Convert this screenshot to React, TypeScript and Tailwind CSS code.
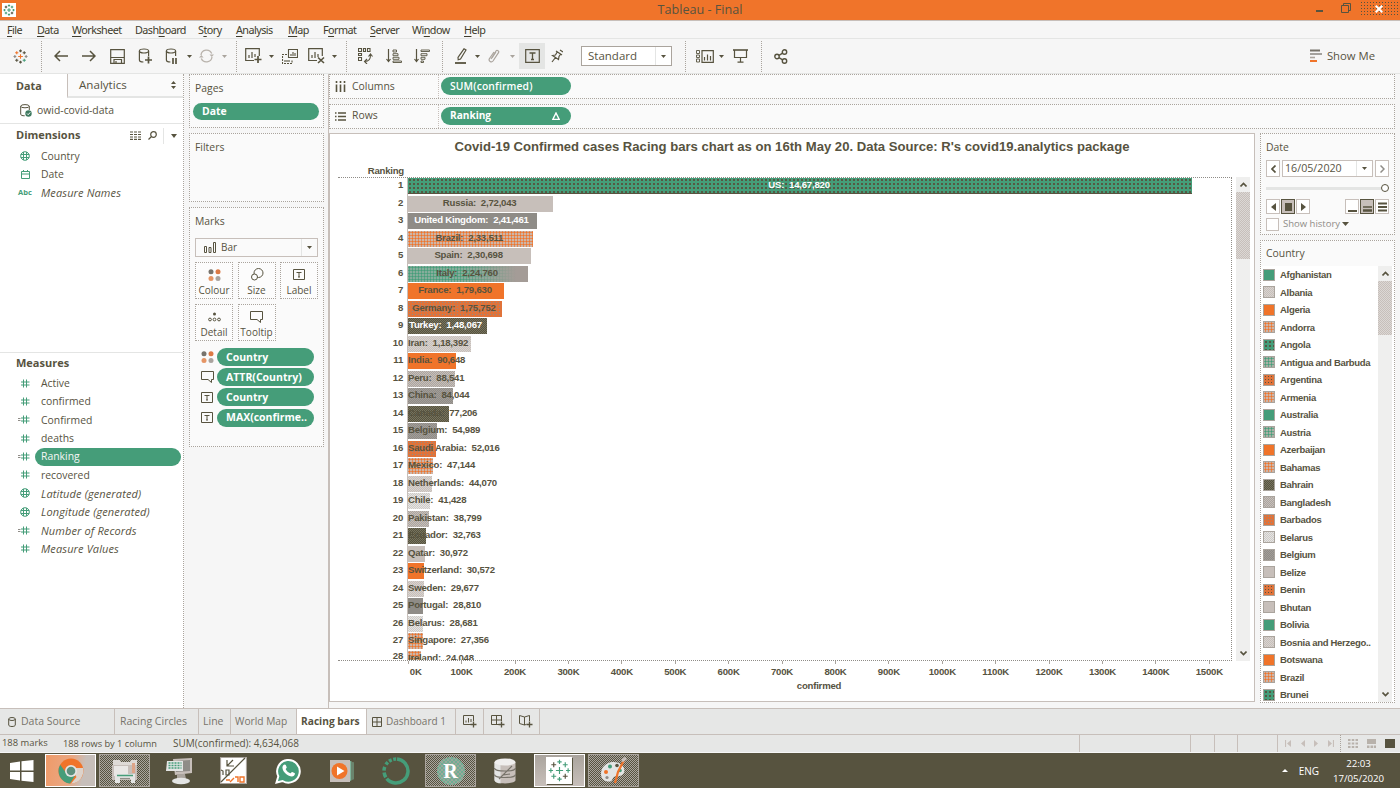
import React from 'react';
import type { ReactNode } from 'react';

const DOT = 'border border-dotted border-[#aaa49d]';

const CHECK = {
  green: 'bg-[#459d79]',
  greenDark: 'bg-[radial-gradient(circle,#57533f_0.7px,transparent_0.8px)] bg-[length:4px_4px] bg-[#459d79]',
  beige: 'bg-[#c7bfba]',
  beigeGray: 'bg-[repeating-conic-gradient(#c7bfba_0_25%,#aba59f_0_50%)] bg-[length:2px_2px]',
  beigeLight: 'bg-[repeating-conic-gradient(#c7bfba_0_25%,#d8d3cf_0_50%)] bg-[length:2px_2px]',
  pale: 'bg-[repeating-conic-gradient(#e4e5e4_0_25%,#cfcac6_0_50%)] bg-[length:2px_2px]',
  gray: 'bg-[#8f8c87]',
  grayBeige: 'bg-[repeating-conic-gradient(#8f8c87_0_25%,#a29d98_0_50%)] bg-[length:2px_2px]',
  orangeBeige: 'bg-[radial-gradient(circle,#f0742a_0.9px,transparent_1.2px)] bg-[length:3px_3px] bg-[#cdb5a8]',
  greenGray: 'bg-[radial-gradient(circle,#459d79_0.9px,transparent_1.2px)] bg-[length:3px_3px] bg-[#a9b0a5]',
  greenGrayFade: 'bg-[linear-gradient(90deg,transparent_45%,#a49c97_90%),radial-gradient(circle,#459d79_0.9px,transparent_1.2px)] bg-[length:100%_100%,3px_3px] bg-[#86ad9b]',
  orange: 'bg-[#f0742a]',
  orangeGray: 'bg-[radial-gradient(circle,#8f8c87_0.8px,transparent_0.9px)] bg-[length:3px_3px] bg-[#e0733a]',
  orangeDark: 'bg-[radial-gradient(circle,#57533f_0.8px,transparent_0.9px)] bg-[length:3px_3px] bg-[#e0733a]',
  dark: 'bg-[repeating-conic-gradient(#57533f_0_25%,#77745f_0_50%)] bg-[length:2px_2px]',
};
type Fill = keyof typeof CHECK;

const BARS: [string, string, number, Fill, boolean?][] = [
  ['US', '14,67,820', 1467820, 'greenDark', true],
  ['Russia', '2,72,043', 272043, 'beige'],
  ['United Kingdom', '2,41,461', 241461, 'gray', true],
  ['Brazil', '2,33,511', 233511, 'orangeBeige'],
  ['Spain', '2,30,698', 230698, 'beige'],
  ['Italy', '2,24,760', 224760, 'greenGrayFade'],
  ['France', '1,79,630', 179630, 'orange'],
  ['Germany', '1,75,752', 175752, 'orangeGray'],
  ['Turkey', '1,48,067', 148067, 'dark', true],
  ['Iran', '1,18,392', 118392, 'beigeLight'],
  ['India', '90,648', 90648, 'orange'],
  ['Peru', '88,541', 88541, 'beigeGray'],
  ['China', '84,044', 84044, 'grayBeige'],
  ['Canada', '77,206', 77206, 'dark'],
  ['Belgium', '54,989', 54989, 'grayBeige'],
  ['Saudi Arabia', '52,016', 52016, 'orangeGray'],
  ['Mexico', '47,144', 47144, 'orangeBeige'],
  ['Netherlands', '44,070', 44070, 'beigeLight'],
  ['Chile', '41,428', 41428, 'pale'],
  ['Pakistan', '38,799', 38799, 'beigeGray'],
  ['Ecuador', '32,763', 32763, 'dark'],
  ['Qatar', '30,972', 30972, 'beige'],
  ['Switzerland', '30,572', 30572, 'orange'],
  ['Sweden', '29,677', 29677, 'beigeLight'],
  ['Portugal', '28,810', 28810, 'gray'],
  ['Belarus', '28,681', 28681, 'pale'],
  ['Singapore', '27,356', 27356, 'orangeBeige'],
  ['Ireland', '24,048', 24048, 'orangeBeige'],
];

const LEGEND: [string, Fill][] = [
  ['Afghanistan', 'green'],
  ['Albania', 'beigeLight'],
  ['Algeria', 'orange'],
  ['Andorra', 'orangeBeige'],
  ['Angola', 'greenDark'],
  ['Antigua and Barbuda', 'greenGray'],
  ['Argentina', 'orangeDark'],
  ['Armenia', 'orangeBeige'],
  ['Australia', 'green'],
  ['Austria', 'greenGray'],
  ['Azerbaijan', 'orange'],
  ['Bahamas', 'orangeBeige'],
  ['Bahrain', 'dark'],
  ['Bangladesh', 'beigeGray'],
  ['Barbados', 'orangeGray'],
  ['Belarus', 'pale'],
  ['Belgium', 'grayBeige'],
  ['Belize', 'beige'],
  ['Benin', 'orangeDark'],
  ['Bhutan', 'beige'],
  ['Bolivia', 'green'],
  ['Bosnia and Herzego..', 'beigeLight'],
  ['Botswana', 'orange'],
  ['Brazil', 'orangeBeige'],
  ['Brunei', 'greenDark'],
];

function Svg({ w, h, children, className = '', sw = 1.2 }: { w: number; h: number; children: ReactNode; className?: string; sw?: number }) {
  return (
    <svg width={w} height={h} viewBox={`0 0 ${w} ${h}`} fill="none" stroke="currentColor" strokeWidth={sw} className={`shrink-0 ${className}`}>
      {children}
    </svg>
  );
}

function Caret({ className = '' }: { className?: string }) {
  return (
    <Svg w={5} h={3} className={className}>
      <path d="M0 0h5L2.500 3z" fill="currentColor" stroke="none" />
    </Svg>
  );
}

function BigCaret() {
  return (
    <Svg w={7} h={4}>
      <path d="M0 0h7L3.500 4z" fill="currentColor" stroke="none" />
    </Svg>
  );
}

function plus(x: number, y: number, r: number) {
  return `M${x - r} ${y}h${2 * r}M${x} ${y - r}v${2 * r}`;
}

function TableauMark({ size, mono, sw = 1.2 }: { size: number; mono?: boolean; sw?: number }) {
  const g = mono ? '#459d79' : '#57533f';
  return (
    <svg width={size} height={size} viewBox="0 0 16 16" fill="none" strokeWidth={sw} className="shrink-0">
      <path d={plus(8, 8, 2.500)} stroke={mono ? '#459d79' : '#f0742a'} />
      <path d={plus(8, 2, 1.500) + plus(8, 14, 1.500)} stroke={g} />
      <path d={plus(2, 8, 1.500) + plus(14, 8, 1.500)} stroke={mono ? g : '#8f8c87'} />
      <path d={plus(4, 4, 1.700)} stroke={mono ? '#57533f' : '#f0742a'} />
      <path d={plus(12, 12, 1.700)} stroke={mono ? '#57533f' : '#459d79'} />
      <path d={plus(12, 4, 1.700) + plus(4, 12, 1.700)} stroke={g} />
    </svg>
  );
}

function Cell({ className, children }: { className: string; children: ReactNode }) {
  return <div className={`flex shrink-0 items-center justify-center ${className}`}>{children}</div>;
}

function Sep({ className }: { className: string }) {
  return <div className={`h-[31px] w-px shrink-0 border-l border-dotted border-[#aaa49d] ${className}`} />;
}

function Menu() {
  const items: [string, number, string][] = [
    ['File', 0, 'w-[30px]'],
    ['Data', 0, 'w-[35px]'],
    ['Worksheet', 0, 'w-[63px]'],
    ['Dashboard', 4, 'w-[63px]'],
    ['Story', 1, 'w-[38px]'],
    ['Analysis', 0, 'w-[52px]'],
    ['Map', 0, 'w-[35px]'],
    ['Format', 1, 'w-[47px]'],
    ['Server', 0, 'w-[42px]'],
    ['Window', 2, 'w-[52px]'],
    ['Help', 0, 'w-[40px]'],
  ];
  return (
    <div className="flex h-[19px] shrink-0 items-center border-b border-t border-b-[#e4e5e4] border-t-[#c7bfba] pl-[7px] pt-[2px] text-[10.800px] tracking-[-0.550px] text-[#3f3c2c] font-['Noto_Sans',sans-serif]">
      {items.map(([t, u, w]) => (
        <div key={t} className={`${w} shrink-0 whitespace-nowrap leading-none`}>
          {t.slice(0, u)}
          <span className="underline underline-offset-2">{t[u]}</span>
          {t.slice(u + 1)}
        </div>
      ))}
    </div>
  );
}

function Toolbar() {
  return (
    <div className="flex h-[35px] shrink-0 items-center border-b border-[#e4e5e4] text-[#57533f]">
      <Cell className="w-[41px]"><TableauMark size={15} /></Cell>
      <Sep className="" />
      <Cell className="ml-[5px] w-[28px]"><Svg w={14} h={12} sw={1.500}><path d="M14 6H1M6 1L1 6l5 5" /></Svg></Cell>
      <Cell className="w-[28px]"><Svg w={14} h={12} sw={1.500}><path d="M0 6h13M8 1l5 5-5 5" /></Svg></Cell>
      <Cell className="w-[28px]">
        <Svg w={15} h={15}><path d="M.7.7h13.600v13.600H.7zM.7 8.500h13.600M4 14v-3.500h7.500V14M6 12v2" /></Svg>
      </Cell>
      <Cell className="w-[28px]">
        <Svg w={14} h={16}><ellipse cx="6" cy="3" rx="4.600" ry="2" /><path d="M1.400 3v9c0 1 1.600 2 4 2M10.600 3v5" /><path d="M7 12h7M10.500 8.500v7" strokeWidth="1.700" /></Svg>
      </Cell>
      <Cell className="w-[24px]">
        <Svg w={13} h={16}><ellipse cx="6" cy="3" rx="4.600" ry="2" /><path d="M1.400 3v9c0 1 1.600 2 4 2M10.600 3v5" /><path d="M8 10v6M11 10v6" strokeWidth="1.700" /></Svg>
      </Cell>
      <Cell className="w-[12px]"><Caret /></Cell>
      <Cell className="w-[22px] text-[#b8b2ab]">
        <Svg w={15} h={14} sw={1.300}><path d="M2 6a5.600 5.600 0 0 1 10.700-1.500M13 8A5.600 5.600 0 0 1 2.300 9.500" /><path d="M10.500 5.500h4.500l-2.200 2.500zM0 8.500h4.600L2.300 6z" fill="currentColor" stroke="none" /></Svg>
      </Cell>
      <Cell className="w-[14px] text-[#aaa49d]"><Caret /></Cell>
      <Sep className="ml-[5px]" />
      <Cell className="ml-1 w-[24px]">
        <Svg w={17} h={16}><path d="M9 12.500H.7V.7h13.600V8M4 10V7M7 10V4M10 9V6" /><path d="M9.500 11.500h7M13 8v7" strokeWidth="1.700" /></Svg>
      </Cell>
      <Cell className="w-[12px]"><Caret /></Cell>
      <Cell className="w-[26px]">
        <Svg w={16} h={15} sw={1.100}><path d="M6.500.5h9v8h-9zM9 7V5M11 7V3M13 7V4" /><path d="M5 5.500H.5v9h9.500v-4M3 13v-2M5 13v-3M7 13v-2" strokeDasharray="2 1" /></Svg>
      </Cell>
      <Cell className="w-[26px]">
        <Svg w={17} h={16}><path d="M9 12.500H.7V.7h13.600V8M4 10V7M7 10V4M10 9V6" /><path d="M10 9.500l6 5.500M16 9.500l-6 5.500" strokeWidth="1.600" /></Svg>
      </Cell>
      <Cell className="w-[11px]"><Caret /></Cell>
      <Sep className="ml-[6px]" />
      <Cell className="ml-1 w-[28px]">
        <Svg w={15} h={16} sw={1.100}><path d="M.5.5h3v3h-3zM5.500.5h2v3h-2zM9.500.5h2.500v3H9.500zM.5 5.500h3v2h-3zM.5 9.500h3v3h-3zM7 13.500c4 0 5.500-2.500 5.500-6.500M10.500 8.500l2-2.500 2 2.500M9 11l-2.500 2.500L9 16" /></Svg>
      </Cell>
      <Cell className="w-[29px]">
        <Svg w={16} h={14}><path d="M2.500 0v12M.5 10l2 2.500 2-2.500" /><path d="M7 1h3.500v2H7zM7 4.700h5v2H7zM7 8.300h6v2H7zM7 12h8.500v1.500H7z" strokeWidth=".9" /></Svg>
      </Cell>
      <Cell className="w-[28px]">
        <Svg w={16} h={14}><path d="M2.500 0v12M.5 10l2 2.500 2-2.500" /><path d="M7 1h8.500v1.500H7zM7 4.700h6v2H7zM7 8.300h4v2H7zM7 12h2.500v1.500H7z" strokeWidth=".9" /></Svg>
      </Cell>
      <Sep className="ml-[6px]" />
      <Cell className="ml-[6px] w-[24px]">
        <Svg w={12} h={16}><path d="M9 .8l2 1.200-5.500 9-2.300.8L3 9.500z" /><path d="M0 15h11" strokeWidth="1.800" /></Svg>
      </Cell>
      <Cell className="w-[9px]"><Caret /></Cell>
      <Cell className="w-[24px] text-[#aaa49d]">
        <Svg w={12} h={14}><path d="M3 10l5-8c1-1.500 3.500 0 2.500 1.700L5 12c-1.500 2-5 0-3.500-2.500L6 3M4 9l4-6" /></Svg>
      </Cell>
      <Cell className="w-[12px] text-[#aaa49d]"><Caret /></Cell>
      <Cell className="ml-px h-[26px] w-[26px] bg-[#e4e5e4]">
        <Svg w={15} h={14}><path d="M.7.7h13.600v12.600H.7z" /><path d="M4.500 4h6M7.500 4v6.500M6 10.500h3" strokeWidth="1.300" /></Svg>
      </Cell>
      <Cell className="w-[24px]">
        <Svg w={12} h={14}><path d="M5 2l6 4M6.300 2.800L4.500 6 1.500 6.500l6 4L8 7.500l1.800-2.500M4.500 8.500L1 13M9 1l3 2" /></Svg>
      </Cell>
      <div className="ml-[12px] flex h-[20px] w-[91px] shrink-0 items-center border border-[#aaa49d] bg-white pl-[6px] text-[11.500px] text-[#57533f]">
        <span className="flex-1">Standard</span>
        <span className="flex h-full w-[16px] items-center justify-center border-l border-[#e4e5e4]"><Caret /></span>
      </div>
      <Sep className="ml-[13px]" />
      <Cell className="ml-[8px] w-[22px]">
        <Svg w={18} h={13}><path d="M.5.500h3v3h-3zM.5 5h3v2.500h-3zM.5 9h3v3h-3z" strokeWidth=".9" /><path d="M6 .7h11.300v11.600H6zM8.500 10.500V7M11.500 10.500v-6M14.500 10.500V6" /></Svg>
      </Cell>
      <Cell className="w-[10px]"><Caret /></Cell>
      <Cell className="w-[28px]">
        <Svg w={15} h={14}><path d="M0 1h15" strokeWidth="1.600" /><path d="M1.500 1v7.500h12V1M7.500 8.500V13M4.500 13.200h6" /></Svg>
      </Cell>
      <Sep className="ml-[7px]" />
      <Cell className="ml-[5px] w-[27px]">
        <Svg w={14} h={15} sw={1.400}><circle cx="3" cy="7.500" r="2.200" /><circle cx="10.500" cy="3" r="2.200" /><circle cx="10.500" cy="12" r="2.200" /><path d="M5 6.400l3.600-2.200M5 8.600l3.600 2.200" /></Svg>
      </Cell>
      <div className="ml-auto mr-[25px] flex items-center gap-[5px] text-[11.300px]">
        <Svg w={12} h={13} className="mb-px">
          <path d="M0 1.500h10" stroke="#77736a" strokeWidth="2" /><path d="M0 5h12" stroke="#8f8c87" strokeWidth="1.600" /><path d="M0 8.500h5" stroke="#aaa49d" strokeWidth="1.600" /><path d="M0 12h7" stroke="#f0742a" strokeWidth="2" />
        </Svg>
        <span>Show Me</span>
      </div>
    </div>
  );
}

function Globe() {
  return (
    <Svg w={10} h={10} sw={1} className="text-[#459d79]"><circle cx="5" cy="5" r="4.300" /><path d="M.8 3.500h8.400M.8 6.500h8.400M3.500 1v8M6.500 1v8" /></Svg>
  );
}
function Hash({ eq }: { eq?: boolean }) {
  return (
    <Svg w={12} h={9} sw={1} className="mr-[2px] text-[#459d79]">
      <path d="M5.500.5v8M8.500.5v8M3 3h8.500M3 6h8.500" />
      {eq && <path d="M0 3.500h2.500M0 5.500h2.500" stroke="#8f8c87" />}
    </Svg>
  );
}

function Field({ icon, label, italic, active }: { icon: ReactNode; label: string; italic?: boolean; active?: boolean }) {
  return (
    <div className="flex h-[18.370px] items-center">
      <div className="flex w-[34px] shrink-0 justify-end"><div className="flex w-[18px] items-center justify-center">{icon}</div></div>
      <div
        className={`ml-px mr-[2px] flex h-[18px] flex-1 items-center rounded-full pl-[6px] leading-none ${
          active ? 'bg-[#459d79] text-[#f6f6f6]' : ''
        } ${italic ? 'text-[11px] italic tracking-[0.120px]' : 'text-[10.400px]'}`}
      >
        {label}
      </div>
    </div>
  );
}

function DataPane() {
  return (
    <div className="flex w-[184px] shrink-0 flex-col border-r border-dotted border-[#aaa49d] bg-white">
      <div className="flex h-[24px] shrink-0">
        <div className="flex w-[67px] items-center pl-[16px] text-[10.800px] font-bold">Data</div>
        <div className="flex flex-1 items-center justify-between border-b-2 border-l border-b-[#e4e5e4] border-l-[#c7bfba] bg-[#fafafa] pl-[11px] pr-[7px] text-[11.600px]">
          <span>Analytics</span>
          <Svg w={5} h={8}><path d="M0 3h5L2.500 0zM0 5h5L2.500 8z" fill="currentColor" stroke="none" /></Svg>
        </div>
      </div>
      <div className="flex h-[26px] shrink-0 items-center border-b border-[#e4e5e4] pl-[20px] text-[10.400px]">
        <Svg w={12} h={13} sw={1} className="mr-[5px]"><ellipse cx="5" cy="2.200" rx="4.300" ry="1.600" /><path d="M.7 2.200v8c0 1 1.500 1.600 4 1.600M9.300 2.200V6" /><circle cx="8.500" cy="9.500" r="3.200" fill="#3f7a60" stroke="none" /><path d="M7 9.500l1.200 1.200 2-2.300" stroke="#fff" /></Svg>
        owid-covid-data
      </div>
      <div className="flex h-[23px] shrink-0 items-center pl-[16px] pr-[6px]">
        <span className="flex-1 text-[11px] font-bold">Dimensions</span>
        <Svg w={11} h={9} sw={1.200}><path d="M0 1h11M0 3.500h11M0 6h11M0 8.300h11" strokeDasharray="3 1" /></Svg>
        <Svg w={9} h={9} className="ml-[7px]"><circle cx="5.500" cy="3.500" r="2.800" /><path d="M3.500 5.500L.5 8.500" /></Svg>
        <div className="ml-[6px] mr-[7px] h-[16px] w-px bg-[#e4e5e4]" />
        <Svg w={6} h={4}><path d="M0 0h6L3 4z" fill="currentColor" stroke="none" /></Svg>
      </div>
      <div className="flex h-[206px] shrink-0 flex-col border-b border-[#e4e5e4]">
        <Field icon={<Globe />} label="Country" />
        <Field icon={<Svg w={9} h={9} sw={1} className="text-[#459d79]"><path d="M.5 1.500h8v7h-8zM.5 4h8M2.500 0v2M6.500 0v2" /></Svg>} label="Date" />
        <Field icon={<span className="text-[7.500px] font-bold text-[#459d79]">Abc</span>} label="Measure Names" italic />
      </div>
      <div className="flex h-[21px] shrink-0 items-center pl-[16px] text-[11px] font-bold">Measures</div>
      <Field icon={<Hash />} label="Active" />
      <Field icon={<Hash />} label="confirmed" />
      <Field icon={<Hash eq />} label="Confirmed" />
      <Field icon={<Hash />} label="deaths" />
      <Field icon={<Hash eq />} label="Ranking" active />
      <Field icon={<Hash />} label="recovered" />
      <Field icon={<Globe />} label="Latitude (generated)" italic />
      <Field icon={<Globe />} label="Longitude (generated)" italic />
      <Field icon={<Hash eq />} label="Number of Records" italic />
      <Field icon={<Hash />} label="Measure Values" italic />
    </div>
  );
}

function Pill({ children, className }: { children: ReactNode; className: string }) {
  return (
    <div className={`flex shrink-0 items-center rounded-full bg-[#459d79] leading-none text-white ${className}`}>{children}</div>
  );
}

function Dots() {
  return (
    <Svg w={13} h={12}>
      <g stroke="none"><circle cx="3" cy="2.800" r="2.500" fill="#77736c" /><circle cx="10" cy="2.800" r="2.500" fill="#dc7a45" /><circle cx="3" cy="9.500" r="2.500" fill="#e59565" /><circle cx="10" cy="9.500" r="2.500" fill="#a9a39e" /></g>
    </Svg>
  );
}
function TextBox() {
  return <Svg w={12} h={11} sw={1}><path d="M.5.500h11v10H.5z" /><path d="M3.500 3.500h5M6 3.500v4.500M5 8h2" /></Svg>;
}
function Bubble() {
  return <Svg w={13} h={12} sw={1}><path d="M.5.500h12v8h-2v3l-3.500-3H.5z" /></Svg>;
}

function MarkButton({ icon, label }: { icon: ReactNode; label: string }) {
  return (
    <div className={`flex h-[37px] w-[38px] flex-col items-center bg-[#fcfcfc] pt-[5px] ${DOT}`}>
      <div className="flex h-[13px] items-center">{icon}</div>
      <div className="mt-[4px] text-[10px] leading-[11px]">{label}</div>
    </div>
  );
}

function Cards() {
  const marks: [ReactNode, string][] = [
    [<Dots key="i" />, 'Country'],
    [<Bubble key="i" />, 'ATTR(Country)'],
    [<TextBox key="i" />, 'Country'],
    [<TextBox key="i" />, 'MAX(confirme..'],
  ];
  return (
    <div className="flex w-[145px] shrink-0 flex-col border-r border-[#c7bfba] pl-[5px] pr-[4px] text-[10.400px]">
      <div className={`h-[54px] shrink-0 bg-[#fafafa] ${DOT}`}>
        <div className="flex h-[27px] items-center pl-[5px]">Pages</div>
        <Pill className="ml-[3px] mt-px h-[17px] w-[126px] pl-[9px] text-[10.400px] font-bold">Date</Pill>
      </div>
      <div className={`mt-[5px] h-[69px] shrink-0 bg-[#fafafa] ${DOT}`}>
        <div className="flex h-[27px] items-center pl-[5px]">Filters</div>
      </div>
      <div className={`mt-[5px] h-[240px] shrink-0 bg-[#fafafa] pl-[5px] ${DOT}`}>
        <div className="flex h-[27px] items-center">Marks</div>
        <div className="mt-[3px] flex h-[19px] w-[123px] items-center border border-[#c7bfba] bg-[#fafafa] pl-[8px]">
          <Svg w={13} h={11} sw={1}><path d="M.5 4.500h2v6h-2zM5 5.500h2v5H5zM9.500.5h2v10h-2z" /></Svg>
          <span className="ml-[4px] flex-1 text-[10px]">Bar</span>
          <span className="flex h-full w-[16px] items-center justify-center border-l border-[#e4e5e4]"><Caret /></span>
        </div>
        <div className="mt-[5px] grid grid-cols-[38px_38px_38px] gap-x-[4.500px] gap-y-[5px]">
          <MarkButton icon={<Dots />} label="Colour" />
          <MarkButton icon={<Svg w={14} h={13} sw={1}><circle cx="8.500" cy="5" r="4.500" /><circle cx="4.500" cy="9" r="3" fill="#fcfcfc" /></Svg>} label="Size" />
          <MarkButton icon={<TextBox />} label="Label" />
          <MarkButton icon={<Svg w={13} h={10} sw={1}><circle cx="6.500" cy="2" r="1.500" fill="currentColor" stroke="none" /><circle cx="2" cy="7.500" r="1.400" /><circle cx="6.500" cy="7.500" r="1.400" /><circle cx="11" cy="7.500" r="1.400" /></Svg>} label="Detail" />
          <MarkButton icon={<Bubble />} label="Tooltip" />
        </div>
        <div className="mt-[6px] flex flex-col">
          {marks.map(([icon, label], i) => (
            <div key={i} className="flex h-[20.200px] items-center">
              <div className="flex w-[22px] items-center justify-center pl-[2px]">{icon}</div>
              <Pill className="h-[18px] w-[97px] pl-[9px] text-[10.500px] font-bold">{label}</Pill>
            </div>
          ))}
        </div>
      </div>
    </div>
  );
}

function Shelf({ icon, label, children }: { icon: ReactNode; label: string; children: ReactNode }) {
  return (
    <div className={`flex h-[25px] shrink-0 items-center bg-[#fafafa] ${DOT}`}>
      <div className="flex h-full w-[109px] items-center border-r border-dotted border-[#c7bfba] pl-[5px] text-[10.400px]">
        <span className="mr-[6px] flex w-[11px]">{icon}</span>
        {label}
      </div>
      {children}
    </div>
  );
}

function ScrollBar({ className, thumb }: { className: string; thumb: string }) {
  return (
    <div className={`flex shrink-0 flex-col bg-[#efefee] ${className}`}>
      <div className="flex h-[15px] items-center justify-center"><Svg w={7} h={5} sw={1.600}><path d="M.5 4.500l3-3 3 3" /></Svg></div>
      <div className={`bg-[repeating-conic-gradient(#c7bfba_0_25%,#dcd8d5_0_50%)] bg-[length:2px_2px] ${thumb}`} />
      <div className="flex-1" />
      <div className="flex h-[15px] items-center justify-center"><Svg w={7} h={5} sw={1.600}><path d="M.5.500l3 3 3-3" /></Svg></div>
    </div>
  );
}

function Chart() {
  const scale = 53.42 / 100000;
  const small = 'text-[9.600px] tracking-[-0.220px]';
  return (
    <div className="flex h-[569px] w-[926px] shrink-0 flex-col border border-[#c7bfba] bg-white font-['Liberation_Sans',Arial,sans-serif] font-bold">
      <div className="pt-[5px] text-center text-[13.110px] leading-[16px]">
        Covid-19 Confirmed cases Racing bars chart as on 16th May 20. Data Source: R&apos;s covid19.analytics package
      </div>
      <div className={`mt-[10px] w-[74px] self-start text-right leading-[12px] ${small}`}>Ranking</div>
      <div className="flex h-[484px] pl-[8px]">
        <div className={`flex w-[894px] flex-col overflow-hidden border-b border-r border-t border-dotted border-[#8f8c87] ${small}`}>
          {BARS.map(([name, value, n, fill, light], i) => {
            const width = n * scale;
            return (
              <div key={name} className="flex h-[17.500px] shrink-0 items-start">
                <div className={`w-[65px] shrink-0 text-right leading-none ${i === 27 ? 'pt-0' : 'pt-[2px]'}`}>{i + 1}</div>
                <div className="ml-[4px] h-full border-l border-[#c7bfba]" />
                <div className={`flex h-[16px] shrink-0 items-center ${CHECK[fill]} ${n > 150000 ? 'justify-center' : ''} ${i === 0 ? 'border-b border-[#57533f]' : ''}`} style={{ width }}>
                  <span className={`whitespace-pre pb-[2px] leading-none ${n > 150000 ? '-ml-[2px]' : n > 140000 ? 'ml-px' : ''} ${light ? 'text-white' : ''}`}>{`${name}:  ${value}`}</span>
                </div>
              </div>
            );
          })}
        </div>
        <ScrollBar className="ml-[4px] w-[14px]" thumb="h-[67px]" />
      </div>
      <div className="flex pl-[51.500px]">
        {Array.from({ length: 16 }, (_, i) => (
          <div key={i} className="flex w-[53.420px] shrink-0 flex-col items-center">
            <div className="h-[3px] w-px bg-[#aaa49d]" />
            <div className={`mt-[2px] leading-[12px] ${small} ${i === 0 ? 'pl-[15px]' : ''}`}>{i * 100}K</div>
          </div>
        ))}
      </div>
      <div className={`mt-[2px] pl-[54px] text-center leading-[11px] ${small}`}>confirmed</div>
    </div>
  );
}

function SmallBox({ children, className = '' }: { children: ReactNode; className?: string }) {
  return <div className={`flex h-[15px] w-[14px] items-center justify-center border border-[#c7bfba] bg-white ${className}`}>{children}</div>;
}

function SidePanel() {
  return (
    <div className="flex w-[135px] shrink-0 flex-col">
      <div className={`h-[102px] shrink-0 bg-[#fafafa] pl-[5px] pr-[5px] ${DOT}`}>
        <div className="flex h-[26px] items-center pt-px text-[10.400px]">Date</div>
        <div className="flex h-[17px] items-stretch gap-[2px]">
          <SmallBox className="h-auto"><Svg w={5} h={8} sw={1.700}><path d="M4.500.5L1 4l3.500 3.500" /></Svg></SmallBox>
          <div className="flex flex-1 items-center border border-[#c7bfba] bg-white pl-[2px] text-[10.700px]">
            <span className="flex-1 leading-none">16/05/2020</span>
            <span className="flex h-full w-[16px] items-center justify-center border-l border-[#e4e5e4]"><Caret /></span>
          </div>
          <SmallBox className="h-auto text-[#8f8c87]"><Svg w={5} h={8} sw={1.500}><path d="M.5.500L4 4 .5 7.500" /></Svg></SmallBox>
        </div>
        <div className="flex h-[22px] items-center">
          <div className="h-[3px] flex-1 bg-[#e4e5e4]" />
          <div className="-ml-px h-[8px] w-[8px] rounded-full border border-[#57533f] bg-white" />
        </div>
        <div className="flex h-[15px] items-center gap-[1px]">
          <SmallBox><Svg w={5} h={8}><path d="M5 0v8L0 4z" fill="currentColor" stroke="none" /></Svg></SmallBox>
          <SmallBox className="!border-[#57533f] !bg-[#c7bfba]"><Svg w={7} h={8}><path d="M0 0h7v8H0z" fill="#57533f" stroke="none" /></Svg></SmallBox>
          <SmallBox><Svg w={5} h={8}><path d="M0 0v8l5-4z" fill="currentColor" stroke="none" /></Svg></SmallBox>
          <div className="flex-1" />
          <SmallBox><Svg w={9} h={10} sw={2}><path d="M0 9h9" /></Svg></SmallBox>
          <SmallBox className="!border-[#57533f] !bg-[#c7bfba]"><Svg w={9} h={10} sw={1.500}><path d="M0 5h9" /><path d="M0 8.500h9" strokeWidth="2.500" /></Svg></SmallBox>
          <SmallBox><Svg w={9} h={10} sw={2}><path d="M0 1.500h9M0 5h9M0 8.500h9" /></Svg></SmallBox>
        </div>
        <div className="mt-[3px] flex h-[14px] items-center text-[9.500px] text-[#8f8c87]">
          <div className="mr-[4px] h-[13px] w-[13px] border border-[#c7bfba] bg-white" />
          Show history
          <span className="ml-[2px] text-[#57533f]"><BigCaret /></span>
        </div>
      </div>
      <div className={`mt-[5px] flex h-[463px] shrink-0 flex-col bg-white ${DOT}`}>
        <div className="flex h-[25px] shrink-0 items-center bg-[#fafafa] pl-[5px] pt-px text-[10.400px]">Country</div>
        <div className="flex h-[436px]">
          <div className="w-[117px] shrink-0 font-['Liberation_Sans',Arial,sans-serif] text-[9.500px] font-bold tracking-[-0.300px]">
            {LEGEND.map(([n, f]) => (
              <div key={n} className="flex h-[17.500px] items-center whitespace-nowrap">
                <div className={`ml-[2px] mr-[5px] h-[12px] w-[12px] border border-[#aaa49d] ${CHECK[f]}`} />
                <span className="leading-none">{n}</span>
              </div>
            ))}
          </div>
          <ScrollBar className="w-[14px]" thumb="h-[54px]" />
        </div>
      </div>
    </div>
  );
}

function Tab({ children, className }: { children: ReactNode; className: string }) {
  return <div className={`flex h-full shrink-0 items-center border-r border-[#c7bfba] text-[#77736a] ${className}`}>{children}</div>;
}

function GridIcon() {
  return <Svg w={10} h={10} sw={1}><path d="M.5.500h9v9h-9zM5 .5v9M.5 5h9" /></Svg>;
}

function SheetTabs() {
  return (
    <div className="flex h-[27px] shrink-0 border-b border-t border-b-[#c7bfba] border-t-[#c7bfba] bg-[#e6e7e6] text-[10.500px]">
      <Tab className="w-[115px] pl-[8px]">
        <Svg w={8} h={10} sw={1} className="mr-[5px] text-[#57533f]"><ellipse cx="4" cy="2" rx="3.300" ry="1.500" /><path d="M.7 2v6c0 2 6.600 2 6.600 0V2" /></Svg>
        Data Source
      </Tab>
      <Tab className="w-[84px] pl-[5px]">Racing Circles</Tab>
      <Tab className="w-[32px] pl-[4px]">Line</Tab>
      <Tab className="w-[66px] pl-[4px] text-[10.200px]">World Map</Tab>
      <Tab className="w-[70px] bg-white pl-[4px] text-[10.200px] font-bold !text-[#57533f]">Racing bars</Tab>
      <Tab className="w-[89px] pl-[5px] text-[10px]"><span className="mr-[4px] text-[#57533f]"><GridIcon /></span>Dashboard 1</Tab>
      <Tab className="w-[28px] justify-center !text-[#57533f]"><Svg w={14} h={13} sw={1}><path d="M8 9.500H.5v-9h10V6M3 7.500v-2M5.500 7.500V3M8 7V4" /><path d="M7.500 9.500h6M10.500 6.500v6" strokeWidth="1.300" /></Svg></Tab>
      <Tab className="w-[28px] justify-center !text-[#57533f]"><Svg w={14} h={13} sw={1}><path d="M8 9.500H.5v-9h10V6M5.500.500v9M.5 5h10" /><path d="M7.500 9.500h6M10.500 6.500v6" strokeWidth="1.300" /></Svg></Tab>
      <Tab className="w-[28px] justify-center !text-[#57533f]"><Svg w={14} h={13} sw={1}><path d="M5.500 2v8M5.500 10L.5 8.500v-8L5.500 2l5-1.500V6M5.500 10l2-.6" /><path d="M7.500 9.500h6M10.500 6.500v6" strokeWidth="1.300" /></Svg></Tab>
    </div>
  );
}

function StatusBar() {
  const box = 'h-full shrink-0 border-l border-[#c7bfba]';
  return (
    <div className="flex h-[18px] shrink-0 items-center border-b border-[#f6f6f6] bg-[#e6e7e6] text-[#57533f]">
      <span className="w-[61px] shrink-0 pl-[2px] text-[9.400px]">188 marks</span>
      <span className="w-[112px] shrink-0 pl-[2px] text-[9.230px]">188 rows by 1 column</span>
      <span className="text-[10px]">SUM(confirmed): 4,634,068</span>
      <div className="flex-1" />
      <div className={`w-[111px] ${box}`} />
      <div className={`w-[24px] ${box}`} />
      <div className={`w-[23px] ${box}`} />
      <div className={`w-[41px] border-r ${box}`} />
      <div className="flex w-[62px] shrink-0 items-center justify-between pl-[7px] pr-[6px] text-[#c7bfba]">
        <Svg w={6} h={7}><path d="M.5 0v7" /><path d="M6 0v7L2 3.500z" fill="currentColor" stroke="none" /></Svg>
        <Svg w={4} h={7}><path d="M4 0v7L0 3.500z" fill="currentColor" stroke="none" /></Svg>
        <Svg w={4} h={7}><path d="M0 0v7l4-3.500z" fill="currentColor" stroke="none" /></Svg>
        <Svg w={6} h={7}><path d="M5.500 0v7" /><path d="M0 0v7l4-3.500z" fill="currentColor" stroke="none" /></Svg>
      </div>
      <div className="flex h-full w-[60px] shrink-0 items-center gap-[9px] border-l border-dotted border-[#aaa49d] pl-[7px]">
        <Svg w={10} h={9} sw={2} className="text-[#b8b2ab]"><path d="M0 1h10M0 4.500h10M0 8h10" strokeDasharray="2.500 1.250" /></Svg>
        <Svg w={9} h={9} className="text-[#b8b2ab]"><path d="M0 0h9v5H0zM0 6.500h2.500V9H0zM3.500 6.500h2.500V9H3.500zM6.800 6.500H9V9H6.800z" fill="currentColor" stroke="none" /></Svg>
        <Svg w={10} h={9}><path d="M0 0h10v9H0z" fill="currentColor" stroke="none" /></Svg>
      </div>
    </div>
  );
}

function Slot({ children, className = '' }: { children: ReactNode; className?: string }) {
  return <div className={`flex h-[33px] w-[51px] items-center justify-center ${className}`}>{children}</div>;
}

function TaskBar() {
  const open = 'border border-[#aaa49d] bg-[repeating-conic-gradient(#57533f_0_25%,#aaa6a0_0_50%)] bg-[length:2px_2px]';
  return (
    <div className="flex h-[35px] shrink-0 items-center bg-[#57533f] text-white">
      <div className="flex w-[45px] shrink-0 items-center pl-[10px]">
        <Svg w={24} h={22}><path d="M0 3l10-1.500V10.500H0zM11.500 1.300L23.500 0v10.500h-12zM0 12h10v8.500L0 19zM11.500 12h12v10l-12-1.300z" fill="#fff" stroke="none" /></Svg>
      </div>
      <div className="flex shrink-0 gap-[3.300px]">
        <Slot className="border border-white bg-[linear-gradient(100deg,#ef9a68,#e9a884_50%,#c7bfba_75%)]">
          <Svg w={26} h={26}><g stroke="none"><circle cx="13" cy="13" r="12.500" fill="#f0742a" /><path d="M2.200 6.800A12.500 12.500 0 0 0 12 25.500l6-9.500-9.500-.5z" fill="#459d79" /><path d="M25 10H13l5.500 9L13 25.500A12.500 12.500 0 0 0 25 10z" fill="#ddd3cb" /><circle cx="13" cy="13" r="6" fill="#e4e5e4" /><circle cx="13" cy="13" r="4.300" fill="#5d8f7c" /></g></Svg>
        </Slot>
        <Slot className={open}>
          <Svg w={28} h={26}><g stroke="none"><path d="M2 2h7l1 2h9l1-2h6v20H2z" fill="#dedad6" /><path d="M1 7h25v15H1z" fill="#c7bfba" /><path d="M3 8h14v10H3z" fill="#e9e7e5" /><path d="M21 5h3v10h-3z" fill="#dda488" /><path d="M4 16h20v9h-4v-4H9v4H4z" fill="#e4e5e4" /><path d="M6 17.500h16" stroke="#459d79" strokeWidth="1.500" /><path d="M9 20.500h10" stroke="#8f8c87" /></g></Svg>
        </Slot>
        <Slot>
          <Svg w={28} h={28}><g stroke="none"><path d="M8 2l19-1v15l-17 2z" fill="#c7bfba" /><path d="M10 4l15-1v11l-14 1z" fill="#8f8c87" /><path d="M2 4h16v10H1z" fill="#e4e5e4" /><path d="M3.500 6h13M3.500 8.500h13M3.500 11h13" stroke="#459d79" strokeWidth="1.500" strokeDasharray="2 1" /><path d="M12 17h8l1 5h-9z" fill="#aaa49d" /><ellipse cx="16" cy="24" rx="9" ry="3.200" fill="#e4e5e4" /></g></Svg>
        </Slot>
        <Slot>
          <Svg w={27} h={27}><path d="M.5.500h26v26H.5z" fill="#fff" stroke="#aaa49d" /><path d="M25 1L1 25" stroke="#57533f" strokeWidth="1.200" /><path d="M7 3v6h7M7 9l6-6M1 13l2 1v4M6 13h3v5H6z" stroke="#57533f" /><path d="M6 23h4M10 25l4-4M15 20h3v5M20 20h4v5h-4z" stroke="#f0742a" strokeWidth="1.400" /></Svg>
        </Slot>
        <Slot>
          <Svg w={26} h={26}><path d="M1.500 24.500l1.800-6.200A11.300 11.300 0 1 1 7.600 23z" fill="#459d79" stroke="#fff" strokeWidth="2" /><path d="M8.500 7c1-1 2-.7 2.400.3l.8 2c.2.800-1 1.500-1 2 1 2 2.500 3.300 4.500 4 .6 0 1.300-1.600 2-1.400l2.300 1.200c1 .6.200 2-.6 2.700-3 2.200-10.500-2-11.400-7.500-.2-1.300.2-2.500 1-3.300z" fill="#fff" stroke="none" /></Svg>
        </Slot>
        <Slot>
          <Svg w={24} h={24}><g stroke="none"><path d="M0 1h20v22H0z" fill="#c7bfba" /><path d="M20 2l1.500.300v19L20 22zM22.500 3l1 .3v17l-1 .7z" fill="#7fb59c" /><circle cx="9.500" cy="12" r="8" fill="#f0742a" /><path d="M7 7.500v9l7.500-4.500z" fill="#fff" /></g></Svg>
        </Slot>
        <Slot>
          <Svg w={28} h={28}><circle cx="14" cy="14" r="12" stroke="#459d79" strokeWidth="3.500" strokeDasharray="47 1.500 5 2 4 2.500 3 1.500 3 1.500 3 2" transform="rotate(-85 14 14)" /></Svg>
        </Slot>
        <Slot className={open}>
          <div className="flex h-[28px] w-[28px] items-center justify-center rounded-full bg-[repeating-conic-gradient(#6fae93_0_25%,#9aa79b_0_50%)] bg-[length:4px_4px] font-['Liberation_Serif',serif] text-[20px] font-bold leading-none">R</div>
        </Slot>
        <Slot>
          <Svg w={22} h={26}><g stroke="none"><path d="M.5 4v18c0 4.500 21 4.500 21 0V4z" fill="#c7bfba" /><path d="M.5 4v18c0 2 3 3.300 6 3.500V6z" fill="#e4e5e4" /><ellipse cx="11" cy="4" rx="10.500" ry="3.600" fill="#f0efee" /></g><path d="M.5 10c0 4 21 4 21 0M.5 16.500c0 4 21 4 21 0M5 21l13-13M9 17l7-1" stroke="#77736a" /></Svg>
        </Slot>
        <Slot className="border border-white bg-[linear-gradient(180deg,#aaa49d,#c7bfba)]">
          <div className="flex h-[27px] w-[26px] items-center justify-center bg-white shadow-[1px_1px_0_#57533f]"><TableauMark size={23} mono sw={0.8} /></div>
        </Slot>
        <Slot className={open}>
          <Svg w={27} h={27}><path d="M12 5C5 6 1 11 1 17c0 5 4 8 9 7.500 3-.4 2-4 4.500-5 3-1 6 1 9-3C27 11 20 4 12 5z" fill="#e4e5e4" stroke="none" /><g stroke="none"><circle cx="6" cy="15" r="2" fill="#f0742a" /><circle cx="10" cy="9.500" r="2" fill="#459d79" /><circle cx="17" cy="8.500" r="1.800" fill="#57533f" /><circle cx="7" cy="20.500" r="1.600" fill="#8f8c87" /><circle cx="20" cy="13.500" r="1.800" fill="#459d79" /></g><path d="M15 26l3-11 6-12" stroke="#f0742a" strokeWidth="2.200" /><path d="M22 4l4-3" stroke="#c7bfba" strokeWidth="3" /></Svg>
        </Slot>
      </div>
      <div className="ml-auto flex items-center">
        <Svg w={6} h={3}><path d="M0 3h6L3 0z" fill="#fff" stroke="none" /></Svg>
        <span className="ml-[11px] pt-px text-[10px]">ENG</span>
        <div className="ml-[14px] mr-[16px] text-center text-[9.700px] leading-[15px] tracking-[-0.050px]">
          <div>22:03</div>
          <div>17/05/2020</div>
        </div>
      </div>
    </div>
  );
}

export default function App() {
  return (
    <div className="flex h-[788px] w-[1400px] flex-col overflow-hidden bg-[#f6f6f6] text-[#57533f] font-['Open_Sans',sans-serif]">
      <div className="flex h-[20px] shrink-0 items-center bg-[#f0742a]">
        <div className="flex w-[100px] pl-[2px]"><div className="flex h-[14px] w-[14px] items-center justify-center bg-white"><TableauMark size={12} mono sw={1.500} /></div></div>
        <div className="flex-1 pt-px text-center text-[12.600px] leading-none">Tableau - Final</div>
        <div className="flex w-[100px] items-center justify-end">
          <Svg w={7} h={2} sw={2} className="mr-[4px] mt-[1px]"><path d="M0 1h7" /></Svg>
          <Svg w={10} h={10} sw={1} className="mb-[4px] ml-[14px]"><path d="M.5 2.500h7v7h-7zM2.500 2.500v-2h7v7h-2" /></Svg>
          <div className="mb-[3px] ml-[9px] mr-[2px] flex h-[16px] w-[38px] items-center justify-center bg-[radial-gradient(circle,#57533f_0.7px,transparent_0.8px)] bg-[length:3px_3px]">
            <Svg w={8} h={8} sw={2}><path d="M.7.700l6.600 6.600M7.300.7L.7 7.300" stroke="#fff" /></Svg>
          </div>
        </div>
      </div>
      <Menu />
      <Toolbar />
      <div className="flex min-h-0 flex-1">
        <DataPane />
        <Cards />
        <div className="flex flex-1 flex-col pr-[5px]">
          <Shelf label="Columns" icon={<Svg w={11} h={11} sw={1.600}><path d="M1.500 0v2M5.500 0v2M9.500 0v2M1.500 3.500V11M5.500 3.500V11M9.500 3.500V11" /></Svg>}>
            <Pill className="-mt-px ml-[2px] h-[18px] w-[130px] pl-[9px] text-[10.300px] font-semibold tracking-[0.150px]">SUM(confirmed)</Pill>
          </Shelf>
          <div className="h-[4.500px] shrink-0" />
          <Shelf label="Rows" icon={<Svg w={11} h={9} sw={1.500}><path d="M0 1h1.500M0 4.500h1.500M0 8h1.500M3 1h8M3 4.500h8M3 8h8" /></Svg>}>
            <Pill className="-mt-px ml-[2px] h-[18px] w-[130px] pl-[9px] pr-[11px] text-[10.100px] font-bold">
              <span className="flex-1">Ranking</span>
              <Svg w={8} h={8} sw={1.400}><path d="M4 1l3.200 6.400H.8z" stroke="#fff" /></Svg>
            </Pill>
          </Shelf>
          <div className="mt-[4.500px] flex gap-[5px]">
            <Chart />
            <SidePanel />
          </div>
        </div>
      </div>
      <SheetTabs />
      <StatusBar />
      <TaskBar />
    </div>
  );
}
